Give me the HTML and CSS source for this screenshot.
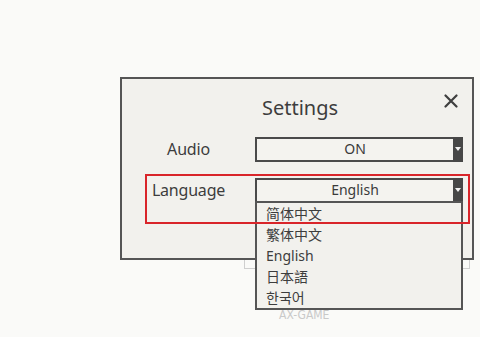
FILE: index.html
```html
<!DOCTYPE html>
<html lang="en">
<head>
    <meta charset="UTF-8">
    <meta name="viewport" content="width=device-width, initial-scale=1.0">
    <title>Settings</title>
    <link rel="stylesheet" href="styles.css">
</head>
<body>

    <div class="screen">
        <div class="dialog">
            <div class="dialog-head">
                <h2 class="dialog-title">Settings</h2>
                <button class="close-btn" aria-label="Close">
                    <svg width="14" height="14" viewBox="0 0 14 14">
                        <path d="M1.5 1.5 L12.5 12.5 M12.5 1.5 L1.5 12.5" stroke="#3f3f3f" stroke-width="2.2" stroke-linecap="round" fill="none"/>
                    </svg>
                </button>
            </div>

            <div class="fields">
                <span class="field-label">Audio</span>
                <div class="select">
                    <span class="select-value">ON</span>
                    <span class="select-arrow"></span>
                </div>

                <span class="field-label">Language</span>
                <div class="select">
                    <span class="select-value">English</span>
                    <span class="select-arrow"></span>
                    <ul class="options">
                        <li>简体中文</li>
                        <li>繁体中文</li>
                        <li>English</li>
                        <li>日本語</li>
                        <li>한국어</li>
                    </ul>
                </div>
            </div>

            <!-- red marker round the language row -->
            <div class="highlight"></div>
        </div>

        <div class="back-btn"></div>
        <p class="brand">AX-GAME</p>
    </div>

</body>
</html>
```

FILE: styles.css
```css
* { box-sizing: border-box; }
body { margin: 0; background: #fafaf8; font-family: "Noto Sans", "Noto Sans CJK SC", sans-serif; color: #3d3d3d; }
.screen { width: 480px; height: 337px; overflow: hidden; padding-top: 77px; }

.dialog { position: relative; width: 354px; height: 183px; margin-left: 120px; border: 2px solid #555; background: #f2f1ed; }
.dialog-head { position: relative; padding: 15px 0 15px; }
.dialog-title { margin: 0; font-size: 20px; line-height: 28px; font-weight: 400; text-align: center; color: #3d3d3d; padding-left: 6px; }
.close-btn { position: absolute; top: 15px; right: 14px; width: 14px; height: 14px; padding: 0; border: 0; background: none; display: flex; }

.fields { display: grid; grid-template-columns: 133px 208px; grid-auto-rows: 25px; row-gap: 16px; }
.field-label { font-size: 16px; line-height: 25px; text-align: center; color: #3d3d3d; letter-spacing: -0.2px; }

.select { position: relative; display: flex; height: 25px; border: 2px solid #4a4a4a; background: #f4f3ef; }
.select-value { flex: 1; font-size: 14px; line-height: 20px; text-align: center; color: #3a3a3a; }
.select-arrow { position: relative; width: 10px; margin: -2px -2px -2px 0; background: #474747; }
.select-arrow::after { content: ""; position: absolute; left: 2px; top: 10px; border-left: 3px solid transparent; border-right: 3px solid transparent; border-top: 4px solid #f2f2f2; }

.options { position: absolute; top: 100%; left: -2px; width: 208px; margin: 0; padding: 0; list-style: none; border: 2px solid #555; background: #f2f1ed; z-index: 2; }
.options li { padding-left: 9px; font-size: 14px; line-height: 21px; color: #3d3d3d; }

.highlight { position: absolute; left: 23px; top: 95px; width: 325px; height: 50px; border: 2px solid #d9252a; z-index: 3; }

.back-btn { width: 226px; height: 9px; margin-left: 244px; border: 1px solid #cfcfcf; border-top: 0; }
.brand { margin: 39px 0 0 279px; font-family: "DejaVu Sans Condensed", "DejaVu Sans", sans-serif; font-stretch: condensed; font-size: 12px; line-height: 14px; color: #c9c9c9; }
```
